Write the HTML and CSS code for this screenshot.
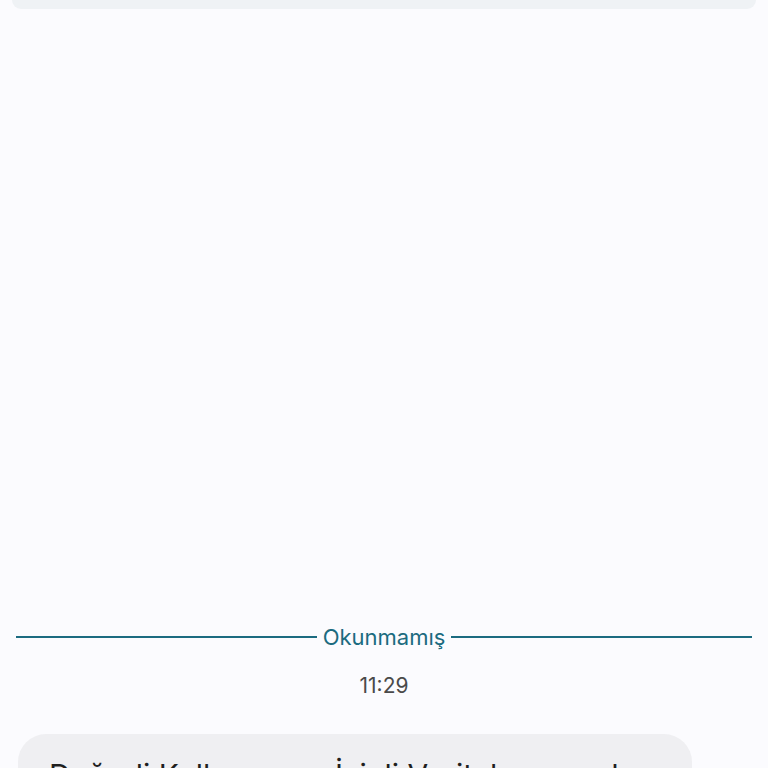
FILE: index.html
```html
<!DOCTYPE html>
<html lang="tr">

<head>
  <meta charset="UTF-8">
  <meta name="viewport" content="width=device-width, initial-scale=1.0">
  <title>Mesajlar</title>
  <link rel="stylesheet" href="styles.css">
</head>

<body>
  <div class="chat">
    <div class="prev-card"></div>
    <div class="divider">
      <span class="divider-line"></span>
      <span class="divider-label">Okunmamış</span>
      <span class="divider-line"></span>
    </div>
    <div class="msg-time">11:29</div>
    <div class="bubble">
      Değerli Kullanıcımız İzinli Veritabanımızda kayıtlı bulunmaktasınız.
    </div>
  </div>
</body>

</html>
```

FILE: styles.css
```css
body {
  margin: 0;
  background-color: #fbfbfe;
  font-family: Inter, Roboto, sans-serif;
  overflow: hidden;
}

.chat {
  height: 768px;
  overflow: hidden;
}

.prev-card {
  height: 9px;
  margin: 0 12px;
  background-color: #eff2f5;
  border-radius: 0 0 18px 18px;
}

.divider {
  display: flex;
  align-items: center;
  gap: 6px;
  padding: 0 16px;
  margin-top: 613px;
}

.divider-line {
  flex: 1;
  height: 2px;
  background-color: #1b6b80;
}

.divider-label {
  font-size: 22px;
  line-height: 30px;
  color: #1b6b80; /* teal */
}

.msg-time {
  text-align: center;
  font-size: 21px;
  line-height: 30px;
  color: #4a4a4a;
  margin-top: 19px;
}

.bubble {
  width: 612px;
  margin: 33px 0 0 18px;
  padding: 22px 31px;
  background-color: #efeff2;
  border-radius: 28px;
  font-size: 30px;
  line-height: 38px;
  color: #1f1f1f;
}
```
